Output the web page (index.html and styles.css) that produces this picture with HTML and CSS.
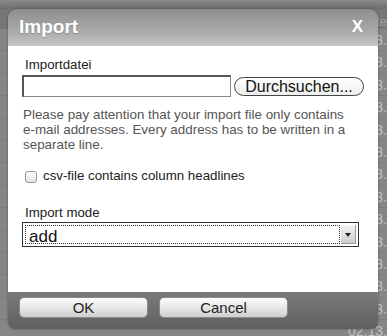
FILE: index.html
```html
<!DOCTYPE html>
<html lang="de">
<head>
  <meta charset="UTF-8" />
  <title>Import</title>
  <link rel="stylesheet" href="styles.css">
</head>
<body>

  <!-- page behind the modal -->
  <div class="backdrop">
    <div class="topbar"></div>
    <div class="thead">te</div>
    <div class="row">3.</div>
    <div class="row">3.</div>
    <div class="row">3.</div>
    <div class="row">3.</div>
    <div class="row">3.</div>
    <div class="row">3.</div>
    <div class="row">3.</div>
    <div class="row">3.</div>
    <div class="row">3.</div>
    <div class="row">3.</div>
    <div class="row">3.</div>
    <div class="row">3.</div>
    <div class="row">3.</div>
    <div class="row">02.13.</div>
  </div>

  <!-- Import dialog -->
  <div class="dialog">
    <div class="dialog-head">
      <span class="title">Import</span>
      <span class="close">X</span>
    </div>

    <div class="dialog-body">
      <div class="label">Importdatei</div>
      <div class="file-row">
        <div class="file-input"></div>
        <div class="browse">Durchsuchen...</div>
      </div>
      <p class="hint">Please pay attention that your import file only contains <span class="nobr">e-mail</span> addresses. Every address has to be written in a separate line.</p>

      <div class="check-row">
        <span class="checkbox"></span>
        <span>csv-file contains column headlines</span>
      </div>

      <div class="label">Import mode</div>
      <div class="select">
        <span class="select-value">add</span>
        <span class="select-arrow"></span>
      </div>
    </div>

    <div class="dialog-foot">
      <div class="btn">OK</div>
      <div class="btn">Cancel</div>
    </div>
  </div>

</body>
</html>
```

FILE: styles.css
```css
* {
  box-sizing: border-box;
}
body {
  margin: 0;
  width: 387px;
  height: 336px;
  overflow: hidden;
  background: #757575;
  font-family: 'Liberation Sans', Arial, sans-serif;
  position: relative;
}
.backdrop {
  width: 100%;
}
.topbar {
  height: 9px;
  background: linear-gradient(#8a8a8a, #6c6c6c);
}
.thead {
  height: 20px;
  background: #777;
  color: #a4a4a4;
  font-size: 13px;
  line-height: 26px;
  text-align: right;
}
.row {
  height: 22.4px;
  line-height: 22px;
  background: #868686;
  border-bottom: 1px solid #7c7c7c;
  color: #c2c2c2;
  font-size: 14px;
  text-align: right;
}
.dialog {
  position: absolute;
  left: 8px;
  top: 9px;
  width: 370px;
  height: 320px;
  border-radius: 9px 9px 7px 7px;
  overflow: hidden;
  display: flex;
  flex-direction: column;
  box-shadow: 0 0 3px rgba(0,0,0,0.3);
}
.dialog-head {
  height: 37px;
  flex: none;
  background: linear-gradient(#8e8e8e, #a9a9a9 60%, #c6c6c6);
  display: flex;
  align-items: center;
  justify-content: space-between;
  padding: 0 15px 2px 11px;
  color: #fff;
  font-weight: bold;
}
.title {
  font-size: 19px;
  text-shadow: 0 1px 1px rgba(0,0,0,0.2);
}
.close {
  font-size: 17px;
}
.dialog-body {
  flex: 1;
  background: #fff;
  padding: 11px 15px 0 14px;
  color: #222;
  font-size: 13px;
}
.label {
  line-height: 15px;
  padding-left: 3px;
  font-size: 13.3px;
}
.file-row {
  display: flex;
  align-items: center;
  margin-top: 3px;
}
.file-input {
  width: 209px;
  height: 22px;
  flex: none;
  border: 1px solid #8a8a8a;
  border-top: 2px solid #555;
  border-left: 2px solid #555;
}
.browse {
  margin-left: 3px;
  width: 130px;
  flex: none;
  height: 19px;
  border: 1px solid #444;
  border-radius: 10px;
  background: linear-gradient(#fff, #eee);
  font-size: 16px;
  line-height: 17px;
  text-align: center;
  color: #111;
}
.hint {
  margin: 10px 0 0 1px;
  color: #555;
  font-size: 13.4px;
  line-height: 15px;
}
.nobr {
  white-space: nowrap;
}
.check-row {
  display: flex;
  align-items: center;
  gap: 6px;
  margin: 16px 0 0 3px;
  line-height: 15px;
  font-size: 13.3px;
}
.checkbox {
  width: 12px;
  height: 12px;
  border: 1px solid #999;
  border-radius: 3px;
  background: linear-gradient(#fff, #e4e4e4);
  margin-top: 2px;
}
.check-row + .label {
  margin-top: 22px;
}
.select {
  margin-top: 2px;
  width: 337px;
  height: 25px;
  border: 1px solid #333;
  display: flex;
  padding: 2px;
}
.select-value {
  flex: 1;
  border: 1px dotted #333;
  font-size: 17px;
  line-height: 21px;
  padding-left: 3px;
  color: #111;
}
.select-arrow {
  width: 15px;
  margin-left: 1px;
  background: linear-gradient(#f4f4f4, #cfcfcf);
  border-right: 1px solid #999;
  border-bottom: 1px solid #999;
  position: relative;
}
.select-arrow::after {
  content: "";
  position: absolute;
  left: 4px;
  top: 8px;
  border-left: 3px solid transparent;
  border-right: 3px solid transparent;
  border-top: 4px solid #222;
}
.dialog-foot {
  height: 37px;
  flex: none;
  background: linear-gradient(#7a7a7a, #5f5f5f);
  display: flex;
  align-items: flex-start;
  gap: 11px;
  padding: 5px 0 0 11px;
}
.btn {
  width: 129px;
  height: 21px;
  border: 1px solid #8a8a8a;
  border-radius: 5px;
  background: linear-gradient(#fdfdfd, #e2e2e2 60%, #cfcfcf);
  font-size: 15px;
  line-height: 19px;
  text-align: center;
  color: #222;
}
```
